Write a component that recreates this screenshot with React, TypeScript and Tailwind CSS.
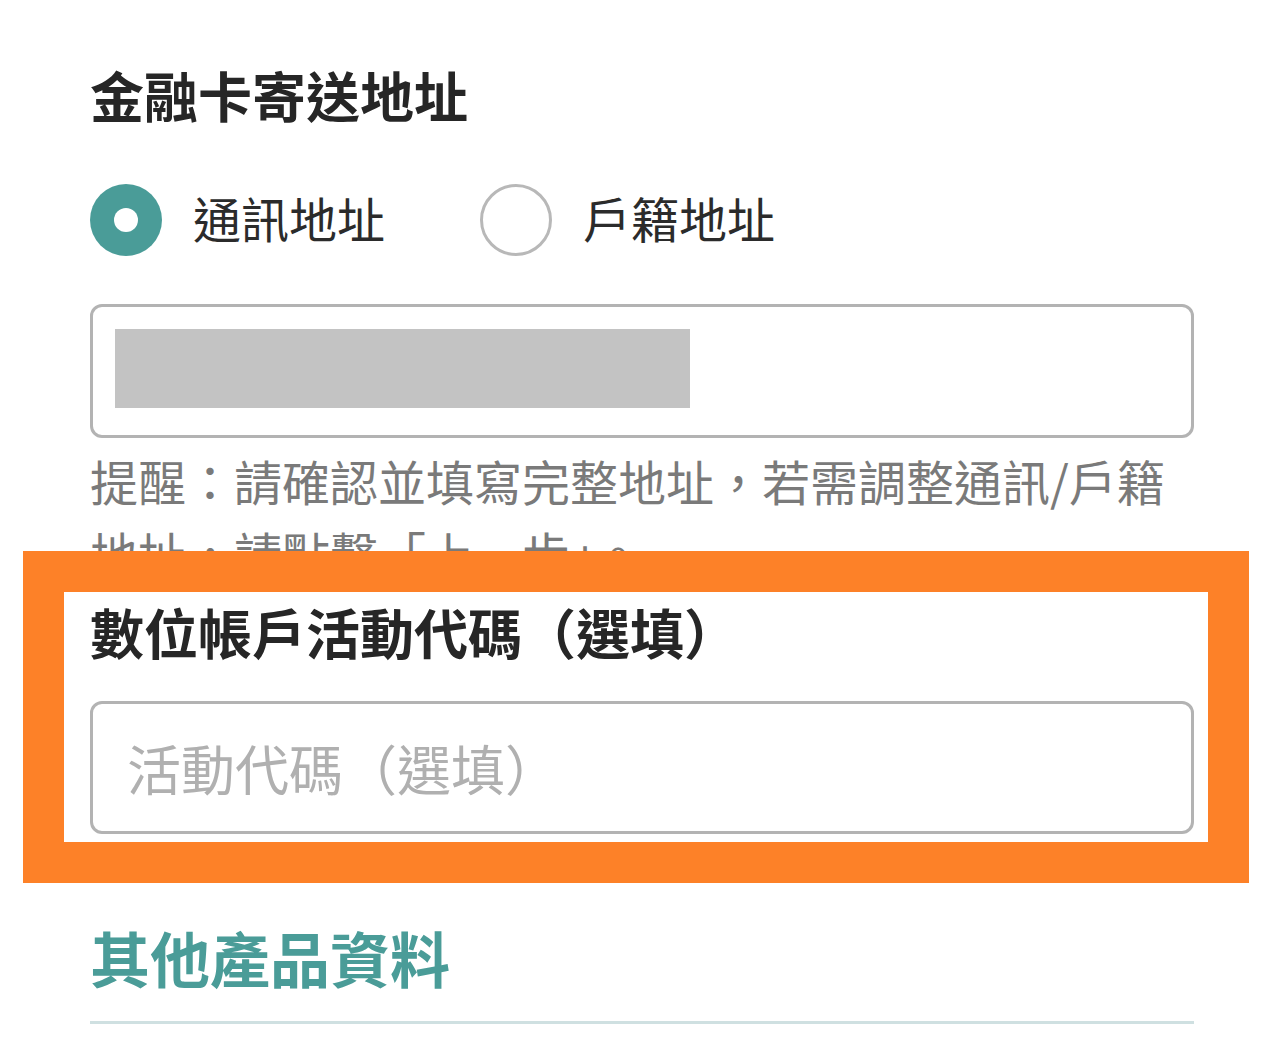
const font = { fontFamily: '"Noto Sans CJK TC", "Noto Sans", sans-serif' }

function Radio({ label, checked }: { label: string; checked?: boolean }) {
  return (
    <label className="flex items-center gap-[31px]">
      {checked ? (
        <span className="flex h-[72px] w-[72px] items-center justify-center rounded-full bg-[#4a9c98]">
          <span className="h-[24px] w-[24px] rounded-full bg-white" />
        </span>
      ) : (
        <span className="h-[72px] w-[72px] rounded-full border-[3px] border-[#b8b8b8] bg-white" />
      )}
      <span className="pb-[6px] text-[48px] leading-[66px] text-[#2b2b2b]">{label}</span>
    </label>
  )
}

export default function App() {
  return (
    <div className="min-h-[1056px] bg-white px-[90px] pt-[68px]" style={font}>
      <h2 className="text-[54px] font-bold leading-[54px] text-[#262626]">
        金融卡寄送地址
      </h2>

      <div className="mt-[62px] flex items-center gap-[95px]">
        <Radio label="通訊地址" checked />
        <Radio label="戶籍地址" />
      </div>

      <div className="mt-[48px] h-[134px] rounded-[12px] border-[3px] border-[#b3b3b3] p-[22px]">
        <div className="h-[79px] w-[575px] bg-[#c3c3c3]" />
      </div>

      <p className="mb-[4px] mt-[6px] text-[48px] leading-[72px] text-[#7a7a7a]">
        提醒：請確認並填寫完整地址，若需調整通訊/戶籍地址，請點擊「上一步」。
      </p>

      <section className="relative pb-[8px] pt-[13px]">
        <h3 className="text-[54px] font-bold leading-[54px] text-[#262626]">
          數位帳戶活動代碼（選填）
        </h3>
        <input
          className="mt-[42px] h-[133px] w-full rounded-[12px] border-[3px] border-[#b3b3b3] pl-[34px] text-[54px] text-[#2b2b2b] outline-none placeholder:text-[#b0b0b0]"
          placeholder="活動代碼（選填）"
          style={font}
        />
        <div className="pointer-events-none absolute -bottom-[41px] -left-[67px] -right-[55px] -top-[41px] border-[41px] border-[#fd8128]" />
      </section>

      <h2 className="mt-[85px] text-[60px] font-bold leading-[60px] text-[#4a9c98]">
        其他產品資料
      </h2>
      <div className="mt-[34px] h-[3px] bg-[#cfe0e1]" />
    </div>
  )
}
